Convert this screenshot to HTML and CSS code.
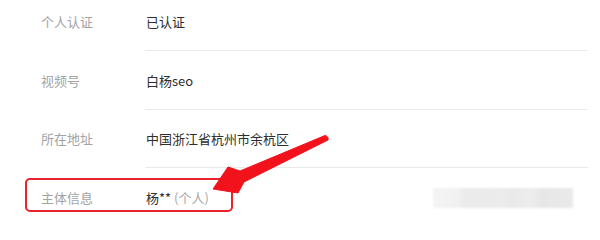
FILE: index.html
```html
<!DOCTYPE html>
<html lang="zh-CN">
<head>
<meta charset="utf-8">
<title>资料</title>
<link rel="stylesheet" href="styles.css">
</head>
<body>
<div class="page">
  <div class="list">
    <div class="row">
      <div class="label">个人认证</div>
      <div class="value">已认证</div>
    </div>
    <div class="row">
      <div class="label">视频号</div>
      <div class="value">白杨seo</div>
    </div>
    <div class="row">
      <div class="label">所在地址</div>
      <div class="value">中国浙江省杭州市余杭区</div>
    </div>
    <div class="row last">
      <div class="label">主体信息</div>
      <div class="value"><span>杨**</span><span class="muted">&nbsp;(个人)</span><span class="redacted"></span></div>
    </div>
  </div>
  <div class="highlight"></div>
  <svg class="arrow" width="600" height="226" viewBox="0 0 600 226">
    <path d="M325 135.5 Q329 136.5 328 140 L244 182 L238 193 L213 189 L228 167 L240 171 Z" fill="#f2121c" stroke="#f2121c" stroke-width="1" stroke-linejoin="round"/>
  </svg>
</div>
</body>
</html>
```

FILE: styles.css
```css
html, body {
  margin: 0;
  padding: 0;
  background: #ffffff;
}

.page {
  position: relative;
  width: 600px;
  height: 226px;
  overflow: hidden;
  font-family: "Noto Sans CJK SC", "Noto Sans", sans-serif;
}

.list {
  display: flex;
  flex-direction: column;
}

.row {
  display: flex;
  align-items: stretch;
  padding-left: 41px;
  padding-right: 12px;
}

.label {
  width: 104px;
  flex: none;
  font-size: 13px;
  color: #a3a3a3;
  line-height: 20px;
  padding-top: 19.5px;
  padding-bottom: 18px;
}

.row:first-child .label,
.row:first-child .value {
  padding-top: 12px;
}

.value {
  flex: 1;
  display: flex;
  align-items: center;
  font-size: 13px;
  color: #2e2e2e;
  line-height: 20px;
  padding-top: 19.5px;
  padding-bottom: 18px;
  padding-left: 1px;
  border-bottom: 1px solid #e9e9e9;
}

.row.last .value {
  border-bottom-color: transparent;
}

.muted {
  color: #a8a8a8;
}

.redacted {
  margin-left: auto;
  margin-right: 15px;
  width: 140px;
  height: 20px;
  background: linear-gradient(90deg, #f4f4f4 0%, #f1f1f1 18%, #ebebeb 22%, #ececec 50%, #e9e9e9 56%, #ededed 70%, #e7e7e7 78%, #eaeaea 100%);
  filter: blur(1px);
}

.highlight {
  position: absolute;
  left: 25px;
  top: 178px;
  width: 204px;
  height: 30px;
  border: 2px solid #e8232d;
  border-radius: 5px;
}

.arrow {
  position: absolute;
  left: 0;
  top: 0;
}
```
